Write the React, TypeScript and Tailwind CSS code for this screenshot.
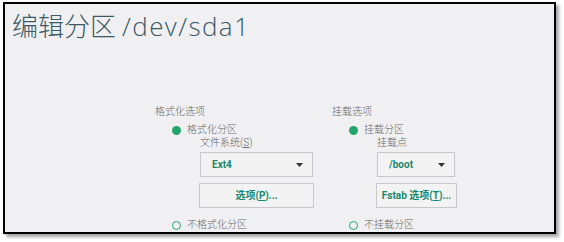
const cjk = { fontFamily: '"Roboto", "Noto Sans CJK SC", sans-serif' };

const Radio = ({ checked, label }: { checked?: boolean; label: string }) => (
  <div className="flex h-[14px] items-center gap-[6px]">
    {checked ? (
      <span className="size-[9px] rounded-full bg-[#23a56c]" />
    ) : (
      <span className="size-[9px] rounded-full border-[1.5px] border-[#23a56c]" />
    )}
    <span className="text-[10px] font-light leading-[14px] text-[#666]">{label}</span>
  </div>
);

const Select = ({ value, width }: { value: string; width: string }) => (
  <div
    className={`flex h-[25px] ${width} items-center justify-between border border-[#c8c8ca] bg-[#f3f3f4] pl-[11px] pr-[9px]`}
  >
    <span className="text-[10px] font-bold text-[#17876a]">{value}</span>
    <svg width="7" height="4" viewBox="0 0 7 4">
      <path d="M0 0h7L3.5 4z" fill="#333" />
    </svg>
  </div>
);

const Button = ({ children, width }: { children: React.ReactNode; width: string }) => (
  <div
    className={`-ml-px mt-[6px] flex h-[25px] ${width} items-center justify-center border border-[#c8c8ca] bg-[#f3f3f4] text-[10px] font-bold text-[#17876a]`}
  >
    {children}
  </div>
);

const Column = ({
  title,
  radioOn,
  subLabel,
  select,
  button,
  radioOff,
}: {
  title: string;
  radioOn: string;
  subLabel: React.ReactNode;
  select: React.ReactNode;
  button: React.ReactNode;
  radioOff: string;
}) => (
  <div className="flex flex-col">
    <div className="text-[10px] font-light leading-[14px] text-[#666]">{title}</div>
    <div className="ml-[17px] mt-[4px] flex flex-col">
      <Radio checked label={radioOn} />
      <div className="ml-[28px] flex flex-col">
        <div className="-mt-px text-[10px] font-light leading-[14px] text-[#666]">{subLabel}</div>
        <div className="mt-[2px]">{select}</div>
        {button}
      </div>
      <div className="mt-[10px]">
        <Radio label={radioOff} />
      </div>
    </div>
  </div>
);

export default function App() {
  return (
    <div className="h-[242px] w-[564px] bg-white pl-[3px] pt-[2px]" style={cjk}>
      <div className="h-[232px] w-[553px] overflow-hidden border-2 border-black bg-[#f0f0f2] shadow-[3px_3px_3px_rgba(0,0,0,0.35)]">
        <h1
          className="pl-[7px] pt-[7px] text-[26px] font-light leading-[30px] text-[#3a5a67]"
          style={{ fontFamily: '"Open Sans", "Noto Sans CJK SC", sans-serif' }}
        >
          编辑分区
          <span className="ml-[6px] tracking-[1.4px]">/dev/sda1</span>
        </h1>
        <div className="ml-[150px] mt-[64px] grid grid-cols-[177px_180px]">
          <Column
            title="格式化选项"
            radioOn="格式化分区"
            subLabel={
              <>
                文件系统(<span className="underline">S</span>)
              </>
            }
            select={<Select value="Ext4" width="w-[113px]" />}
            button={
              <Button width="w-[115px]">
                选项(<span className="underline">P</span>)...
              </Button>
            }
            radioOff="不格式化分区"
          />
          <Column
            title="挂载选项"
            radioOn="挂载分区"
            subLabel="挂载点"
            select={<Select value="/boot" width="w-[78px]" />}
            button={
              <Button width="w-[81px]">
                Fstab 选项(<span className="underline">T</span>)...
              </Button>
            }
            radioOff="不挂载分区"
          />
        </div>
      </div>
    </div>
  );
}
